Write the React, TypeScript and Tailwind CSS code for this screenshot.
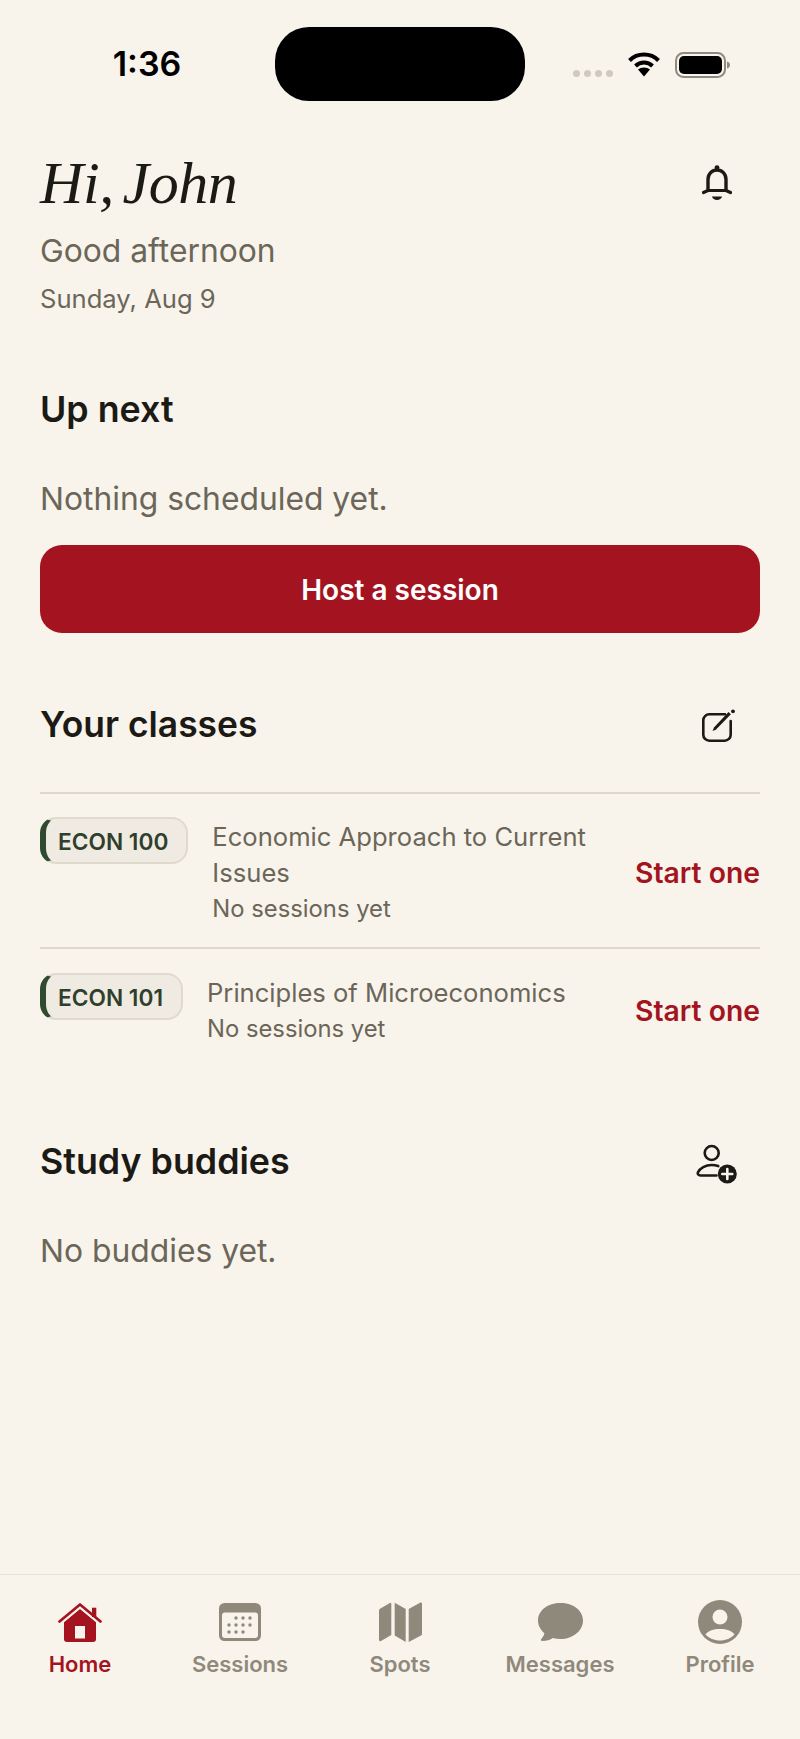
const INTER = "font-['Inter',sans-serif]";

function Wifi() {
  return (
    <svg width="34" height="26" viewBox="0 0 34 26" fill="none">
      <path d="M2.500 9.500C6 6 11 3.600 17 3.600S28 6 31.500 9.500" stroke="#000" strokeWidth="4" />
      <path d="M8.500 15C11 12.600 13.800 11.500 17 11.500S23 12.600 25.500 15" stroke="#000" strokeWidth="4" />
      <path d="M17 25.500l-6-7c1.600-1.300 3.600-2 6-2s4.400.7 6 2z" fill="#000" />
    </svg>
  );
}

function Battery() {
  return (
    <svg width="55" height="26" viewBox="0 0 55 26" fill="none">
      <rect x="1" y="1" width="49" height="24" rx="7.500" stroke="#8f8a7d" strokeWidth="2" />
      <rect x="4" y="4" width="43" height="18" rx="5" fill="#000" />
      <path d="M52 9.500c1.800.5 3 1.900 3 3.500s-1.200 3-3 3.500z" fill="#8f8a7d" />
    </svg>
  );
}

function Bell() {
  return (
    <svg width="30" height="35" viewBox="0 0 30 35" fill="none">
      <circle cx="15" cy="2.600" r="2.400" fill="#1c1a15" />
      <path d="M6 26.500V14.500C6 9 10 5 15 5s9 4 9 9.500v12" stroke="#1c1a15" strokeWidth="3.400" />
      <path d="M1.500 27.500L6 25.500h18l4.500 2" stroke="#1c1a15" strokeWidth="3.200" strokeLinecap="round" strokeLinejoin="round" />
      <path d="M10 31.500h10c-.5 2-2.500 3.500-5 3.500s-4.500-1.500-5-3.500z" fill="#1c1a15" />
    </svg>
  );
}

function EditIcon() {
  return (
    <svg width="34" height="34" viewBox="0 0 34 34" fill="none">
      <path d="M23 5.300H7.300a6 6 0 0 0-6 6v14.400a6 6 0 0 0 6 6h15.400a6 6 0 0 0 6-6V12" stroke="#1c1a15" strokeWidth="2.600" strokeLinecap="round" />
      <path d="M10.500 22l1.500-3.500L26.500 3l2.400 2.200L13.800 20.700z" fill="#1c1a15" />
      <circle cx="31" cy="2.300" r="1.900" fill="#1c1a15" />
    </svg>
  );
}

function AddPerson() {
  return (
    <svg width="42" height="40" viewBox="0 0 42 40" fill="none">
      <circle cx="15.700" cy="9" r="7" stroke="#1c1a15" strokeWidth="2.600" />
      <path d="M20.500 31.500H4.500c-2 0-3.300-1.500-2.500-3.300C4 24 9.500 21 15.700 21c2.300 0 4.500.4 6.500 1.100" stroke="#1c1a15" strokeWidth="2.600" strokeLinecap="round" />
      <circle cx="31.300" cy="30" r="9.500" fill="#1c1a15" />
      <path d="M31.300 25v10M26.300 30h10" stroke="#f8f4ec" strokeWidth="2.600" strokeLinecap="round" />
    </svg>
  );
}

function HomeIcon() {
  return (
    <svg width="44" height="39" viewBox="0 0 44 39" fill="none">
      <path d="M6 19L22 6l16 13v17a3 3 0 0 1-3 3H9a3 3 0 0 1-3-3z" fill="#a31420" />
      <path d="M1.500 19.500L22 1.800 42.500 19.500" stroke="#f8f4ec" strokeWidth="5.500" />
      <path d="M34 4.700h4.300V14H34z" fill="#a31420" />
      <path d="M1.500 18.500L22 1.500 42.500 18.500" stroke="#a31420" strokeWidth="2.700" strokeLinecap="round" strokeLinejoin="round" />
      <rect x="17" y="23" width="10" height="12.500" fill="#f8f4ec" />
    </svg>
  );
}

function CalendarIcon() {
  const dots: [number, number][] = [
    [17, 15], [24, 15], [31, 15],
    [10, 22], [17, 22], [24, 22], [31, 22],
    [10, 29], [17, 29], [24, 29],
  ];
  return (
    <svg width="42" height="38" viewBox="0 0 42 38" fill="none">
      <rect width="42" height="38" rx="5.500" fill="#8f897b" />
      <rect x="3" y="9.500" width="36" height="25.500" rx="3" fill="#f8f4ec" />
      {dots.map(([x, y]) => (
        <circle key={`${x}-${y}`} cx={x} cy={y} r="1.700" fill="#8f897b" />
      ))}
    </svg>
  );
}

function MapIcon() {
  return (
    <svg width="43" height="40" viewBox="0 0 43 40" fill="#8f897b">
      <path d="M0 8.500c0-.8.400-1.300 1-1.700L11 1c.7-.4 1.300 0 1.300.8V33l-10.300 6C1 39.500 0 39 0 38z" />
      <path d="M15.700.7L26.700 7v33l-11-6.500z" />
      <path d="M29.700 7L41 .8c1-.5 2 0 2 1V32c0 .7-.4 1.300-1 1.600L29.700 40z" />
    </svg>
  );
}

function MessageIcon() {
  return (
    <svg width="45" height="38" viewBox="0 0 45 38" fill="#8f897b">
      <path d="M22.500 0C35 0 45 7.200 45 17.500S35 36 22.500 36c-2.700 0-5.300-.3-7.700-1-2.300 1.900-6.300 3-10.800 3-1 0-1.500-1-.9-1.700 1.300-1.400 2.900-3.700 3.300-6C2.600 27 0 22.500 0 17.500 0 7.200 10 0 22.500 0z" />
    </svg>
  );
}

function ProfileIcon() {
  return (
    <svg width="44" height="44" viewBox="0 0 44 44" fill="none">
      <circle cx="22" cy="22" r="22" fill="#8f897b" />
      <circle cx="22" cy="17" r="7.500" fill="#f8f4ec" />
      <path d="M7.500 34.500C10.500 30.500 15.500 29 22 29s11.500 1.500 14.500 5.500C33 38.200 27.800 40.500 22 40.500S11 38.200 7.500 34.500z" fill="#f8f4ec" />
    </svg>
  );
}

function SectionHeader({ title, icon, iconClass, titleClass }: { title: string; icon: React.ReactNode; iconClass: string; titleClass: string }) {
  return (
    <div className="flex items-center justify-between">
      <h2 className={`${titleClass} leading-[44px] font-semibold text-[#1c1a15]`}>{title}</h2>
      <div className={iconClass}>{icon}</div>
    </div>
  );
}

function ClassRow({ code, name, first }: { code: string; name: string; first?: boolean }) {
  return (
    <div className={`flex items-center border-t-2 border-[#ddd8c9] ${first ? "pt-[25px] pb-[20px]" : "pt-[26px] pb-[0px]"}`}>
      <div className="mt-[-2px] mr-[24px] flex h-[47px] items-center self-start rounded-[16px] border-2 border-l-[6px] border-[#dfdacc] border-l-[#2f4a2f] bg-[#efebe3] pt-[3px] pr-[18px] pl-[12px] text-[22.700px] font-semibold whitespace-nowrap text-[#2f3f2c]">
        {code}
      </div>
      <div className="min-w-0 flex-1">
        <div className="text-[25.600px] leading-[36px] text-[#6b6658]">{name}</div>
        <div className="text-[23.800px] leading-[36px] text-[#6b6658]">No sessions yet</div>
      </div>
      <div className="text-[28.300px] leading-[36px] font-semibold whitespace-nowrap text-[#a31420]">Start one</div>
    </div>
  );
}

function NavItem({ label, icon, active }: { label: string; icon: React.ReactNode; active?: boolean }) {
  return (
    <div className="flex flex-col items-center">
      <div className="flex h-[48px] items-center justify-center">{icon}</div>
      <div className={`mt-[2px] text-[22px] leading-[32px] font-semibold ${active ? "text-[#a31420]" : "text-[#8f897b]"}`}>{label}</div>
    </div>
  );
}

export default function App() {
  return (
    <div className={`${INTER} flex h-[1739px] w-[800px] flex-col overflow-hidden bg-[#f8f4ec]`}>
      <div className="flex h-[101px] pt-[27px]">
        <div className="flex w-[275px] justify-center pt-[17px] pl-[19px]">
          <span className="text-[34px] leading-[40px] font-semibold text-black">1:36</span>
        </div>
        <div className="h-[74px] w-[250px] rounded-[34px] bg-black" />
        <div className="flex flex-1 items-start pt-[24px] pl-[48px]">
          <div className="mt-[19px] flex gap-[4px]">
            <span className="size-[7px] rounded-full bg-[#cfcabd]" />
            <span className="size-[7px] rounded-full bg-[#cfcabd]" />
            <span className="size-[7px] rounded-full bg-[#cfcabd]" />
            <span className="size-[7px] rounded-full bg-[#cfcabd]" />
          </div>
          <div className="ml-[14px]"><Wifi /></div>
          <div className="mt-[1px] ml-[14px]"><Battery /></div>
        </div>
      </div>

      <div className="px-[40px] pt-[47px]">
        <div className="flex items-start justify-between">
          <div>
            <h1 className="font-['Liberation_Serif',serif] text-[60px] leading-[70px] font-normal tracking-[-0.4px] text-[#1c1a15] italic [word-spacing:-6px]">Hi, John</h1>
            <p className="mt-[13px] text-[31.800px] leading-[40px] text-[#6b6658]">Good afternoon</p>
            <p className="mt-[10px] text-[25.600px] leading-[36px] text-[#6b6658]">Sunday, Aug 9</p>
          </div>
          <div className="mt-[17px] mr-[28px]"><Bell /></div>
        </div>

        <h2 className="mt-[70px] text-[35.800px] leading-[44px] font-semibold text-[#1c1a15]">Up next</h2>
        <p className="mt-[48px] text-[31.800px] leading-[40px] text-[#6b6658]">Nothing scheduled yet.</p>
        <div className="mt-[26px] flex h-[88px] items-center justify-center rounded-[22px] bg-[#a31420] pt-[2px] text-[28px] font-semibold text-white">Host a session</div>

        <div className="mt-[70px]">
          <SectionHeader title="Your classes" titleClass="text-[35.400px]" icon={<EditIcon />} iconClass="mt-[2px] mr-[24px]" />
        </div>
        <div className="mt-[45px]">
          <ClassRow code="ECON 100" name="Economic Approach to Current Issues" first />
          <ClassRow code="ECON 101" name="Principles of Microeconomics" />
        </div>

        <div className="mt-[91px]">
          <SectionHeader title="Study buddies" titleClass="text-[35.800px]" icon={<AddPerson />} iconClass="mt-[6px] mr-[22px]" />
        </div>
        <p className="mt-[47px] text-[31.800px] leading-[40px] text-[#6b6658]">No buddies yet.</p>
      </div>

      <div className="mt-auto grid h-[165px] grid-cols-5 border-t border-[#e6e1d5] pt-[23px]">
        <NavItem label="Home" icon={<HomeIcon />} active />
        <NavItem label="Sessions" icon={<CalendarIcon />} />
        <NavItem label="Spots" icon={<MapIcon />} />
        <NavItem label="Messages" icon={<MessageIcon />} />
        <NavItem label="Profile" icon={<ProfileIcon />} />
      </div>
    </div>
  );
}
